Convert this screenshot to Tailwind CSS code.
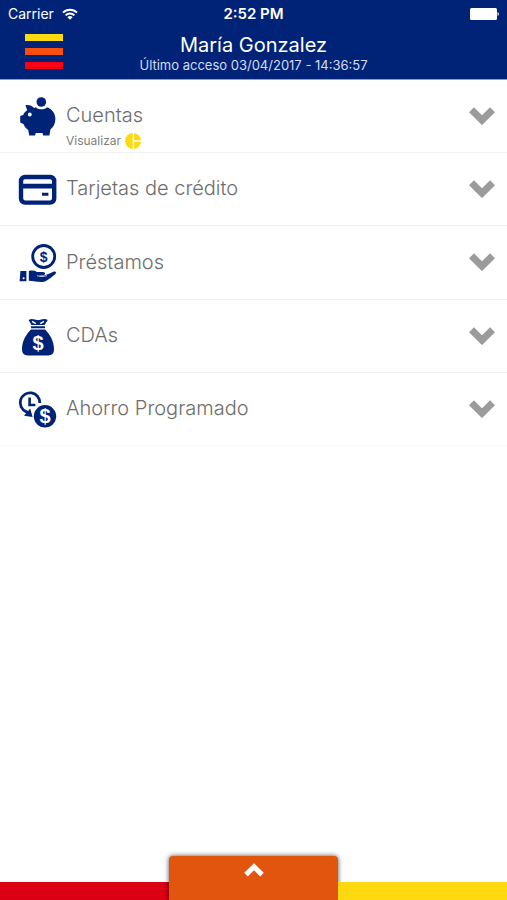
<!DOCTYPE html>
<html lang="es">
<head>
  <meta charset="UTF-8">
  <meta name="viewport" content="width=device-width, initial-scale=1">
  <title>Mis productos</title>
  <script src="https://cdn.jsdelivr.net/npm/@tailwindcss/browser@4"></script>
</head>
<body class="min-h-screen flex flex-col bg-white font-['Inter',sans-serif]">

  <!-- --------------- Cabecera ---------------- -->
  <header class="bg-[#002378] text-white border-b border-[#8a9bd0]">
    <!-- Barra de estado -->
    <div class="grid grid-cols-3 items-center h-7 px-2 text-sm">
      <div class="flex items-center gap-2">
        <span>Carrier</span>
        <svg class="w-4 h-3" viewBox="0 0 16 12" fill="none" stroke="currentColor" stroke-width="2">
          <path d="M1 4.6a10 10 0 0 1 14 0"/>
          <path d="M3.6 7.4a6.3 6.3 0 0 1 8.8 0"/>
          <path d="M8 11.8L5.4 9.2a3.7 3.7 0 0 1 5.2 0z" fill="currentColor" stroke="none"/>
        </svg>
      </div>
      <span class="text-center text-[15px] font-semibold">2:52 PM</span>
      <svg class="justify-self-end w-[30px] h-3" viewBox="0 0 30 12" fill="currentColor">
        <rect x="1" width="27" height="12" rx="1.5"/>
        <path d="M28.6 4a2.2 2.2 0 0 1 0 4z"/>
      </svg>
    </div>

    <!-- Menú y usuario -->
    <div class="grid grid-cols-[64px_1fr_64px] h-[51px]">
      <button type="button" aria-label="Menú" class="flex flex-col gap-[7px] pt-1.5 pl-[25px]">
        <span class="w-[38px] h-[7px] bg-[#ffd90f]"></span>
        <span class="w-[38px] h-[7px] bg-[#f7500f]"></span>
        <span class="w-[38px] h-[7px] bg-[#fb0014]"></span>
      </button>
      <div class="text-center pt-[5px]">
        <h1 class="text-xl leading-6">María Gonzalez</h1>
        <p class="text-[13px] leading-4 text-[#d5dcf2]">Último acceso 03/04/2017 - 14:36:57</p>
      </div>
    </div>
  </header>

  <!-- --------------- Productos ---------------- -->
  <main class="flex-1 text-[#6e6e6e]">
    <ul>
      <li class="flex h-[73px] pl-[18px] pr-3 border-b border-[#f0f0f0]">
        <svg class="w-10 h-10 mt-4 shrink-0" viewBox="0 0 40 40" fill="#002378">
          <circle cx="23.3" cy="6" r="4.8"/>
          <path d="M7.5 9.2C11 8.6 14 9.6 16 12L18 11.2C19.4 14 27.2 14 29 11.2C34 13 37.4 17.4 37.4 23C37.4 27.4 35.5 31 32.4 33.6L31.4 39.6H25.2L24.5 37H17.8L17 39.6H11.2L10.2 34C8 32.6 6.4 30.6 5.4 28L2.2 26.4V20L5.2 19C6 16.8 7.4 15.4 9.2 14.2Z"/>
          <circle cx="11.8" cy="18.5" r="1.9" fill="#fff"/>
        </svg>
        <div class="flex-1 pt-[23px] pl-2">
          <h2 class="text-xl leading-6 font-light">Cuentas</h2>
          <a href="#" class="flex items-center gap-1 mt-1.5 text-xs leading-4 text-[#808080]">
            Visualizar
            <svg class="w-4 h-4" viewBox="0 0 16 16">
              <circle cx="8" cy="8" r="8" fill="#ffd90f"/>
              <path d="M8.4 0V16M8.4 8H16" stroke="#fff" stroke-width="1.4"/>
            </svg>
          </a>
        </div>
        <button type="button" aria-label="Abrir Cuentas" class="self-start mt-[27px]">
          <svg class="w-[26px] h-[18px]" viewBox="0 0 26 18"><path d="M2.5 2.8L13 13.2L23.5 2.8" fill="none" stroke="#9b9b9b" stroke-width="7"/></svg>
        </button>
      </li>

      <li class="flex h-[73px] pl-[18px] pr-3 border-b border-[#f0f0f0]">
        <svg class="w-10 h-10 mt-4 shrink-0" viewBox="0 0 40 40" fill="#002378">
          <rect x="3" y="8" width="33.2" height="25.6" rx="4" fill="none" stroke="#002378" stroke-width="4.4"/>
          <path d="M2 14.8H37V19.4H2ZM24 23.8H30.4V26.8H24Z"/>
        </svg>
        <h2 class="flex-1 pt-[23px] pl-2 text-xl leading-6 font-light">Tarjetas de crédito</h2>
        <button type="button" aria-label="Abrir Tarjetas de crédito" class="self-start mt-[27px]">
          <svg class="w-[26px] h-[18px]" viewBox="0 0 26 18"><path d="M2.5 2.8L13 13.2L23.5 2.8" fill="none" stroke="#9b9b9b" stroke-width="7"/></svg>
        </button>
      </li>

      <li class="flex h-[74px] pl-[18px] pr-3 border-b border-[#f0f0f0]">
        <svg class="w-10 h-10 mt-[17px] shrink-0" viewBox="0 0 40 40" fill="#002378">
          <circle cx="25.7" cy="13.5" r="11" fill="none" stroke="#002378" stroke-width="2.8"/>
          <text x="25.7" y="18.6" text-anchor="middle" class="font-['Liberation_Sans',sans-serif] text-sm font-bold">$</text>
          <path d="M2.4 28H8.4V38.2H1.6ZM10.8 28C14 27.2 16.5 27.6 19 28.9H25C27.6 29 27.8 31.4 25.6 32L20.5 32.5C25 33.6 30 31.4 35.3 28.7C37.8 27.6 39 29.6 37.2 31.2C33 34.6 28.8 38 25.8 38.8C22 39.6 16 38 10.8 37.8Z"/>
          <circle cx="5.6" cy="35.2" r="1" fill="#fff"/>
          <path d="M19 32.6C22 34 26 33.8 29 32.6" fill="none" stroke="#fff" stroke-width=".7"/>
        </svg>
        <h2 class="flex-1 pt-6 pl-2 text-xl leading-6 font-light">Préstamos</h2>
        <button type="button" aria-label="Abrir Préstamos" class="self-start mt-[27px]">
          <svg class="w-[26px] h-[18px]" viewBox="0 0 26 18"><path d="M2.5 2.8L13 13.2L23.5 2.8" fill="none" stroke="#9b9b9b" stroke-width="7"/></svg>
        </button>
      </li>

      <li class="flex h-[73px] pl-[18px] pr-3 border-b border-[#f0f0f0]">
        <svg class="w-10 h-10 mt-4 shrink-0" viewBox="0 0 40 40" fill="#002378">
          <path d="M13.5 9L10.6 4C14 1.6 17 4 20 4S26.4 1.6 29.8 4L26.5 9ZM13 10.2H27V12.2H13ZM13 13.4H27C31.5 17.5 36 25 36 33C36 37.5 34 39.4 30 39.4H10C6 39.4 4 37.5 4 33C4 25 8.5 17.5 13 13.4Z"/>
          <path d="M14 5.4L17.8 7.6M26 5.4L22.2 7.6" stroke="#fff" stroke-width="1.5"/>
          <text x="20" y="33.5" text-anchor="middle" fill="#fff" class="font-['Liberation_Sans',sans-serif] text-xl font-bold">$</text>
        </svg>
        <h2 class="flex-1 pt-[23px] pl-2 text-xl leading-6 font-light">CDAs</h2>
        <button type="button" aria-label="Abrir CDAs" class="self-start mt-[27px]">
          <svg class="w-[26px] h-[18px]" viewBox="0 0 26 18"><path d="M2.5 2.8L13 13.2L23.5 2.8" fill="none" stroke="#9b9b9b" stroke-width="7"/></svg>
        </button>
      </li>

      <li class="flex h-[73px] pl-[18px] pr-3 border-b border-[#fafafa]">
        <svg class="w-10 h-10 mt-4 shrink-0" viewBox="0 0 40 40" fill="#002378">
          <path d="M21.8 14A9.8 9.8 0 1 0 8 22.6L11 24" fill="none" stroke="#002378" stroke-width="2.8"/>
          <path d="M11.6 8.6V16H17.4" fill="none" stroke="#002378" stroke-width="2.6"/>
          <path d="M12.2 19.6L14.6 28L6 26.8Z"/>
          <circle cx="27" cy="27.3" r="11.2"/>
          <text x="27" y="34" text-anchor="middle" fill="#fff" class="font-['Liberation_Sans',sans-serif] text-xl font-bold">$</text>
        </svg>
        <h2 class="flex-1 pt-[23px] pl-2 text-xl leading-6 font-light">Ahorro Programado</h2>
        <button type="button" aria-label="Abrir Ahorro Programado" class="self-start mt-[27px]">
          <svg class="w-[26px] h-[18px]" viewBox="0 0 26 18"><path d="M2.5 2.8L13 13.2L23.5 2.8" fill="none" stroke="#9b9b9b" stroke-width="7"/></svg>
        </button>
      </li>
    </ul>
  </main>

  <!-- --------------- Pie ---------------- -->
  <footer class="grid grid-cols-3 items-end">
    <div class="h-[18px] bg-[#dc0014]"></div>
    <button type="button" aria-label="Mostrar opciones"
            class="flex justify-center h-11 pt-[7px] bg-[#e2550f] rounded-t shadow-[0_0_5px_rgba(0,0,0,0.7)]">
      <svg class="w-5 h-3.5" viewBox="0 0 20 14"><path d="M2 11.6L10 3.8L18 11.6" fill="none" stroke="#fff" stroke-width="5"/></svg>
    </button>
    <div class="h-[18px] bg-[#ffd90f] z-10"></div>
  </footer>

</body>
</html>
